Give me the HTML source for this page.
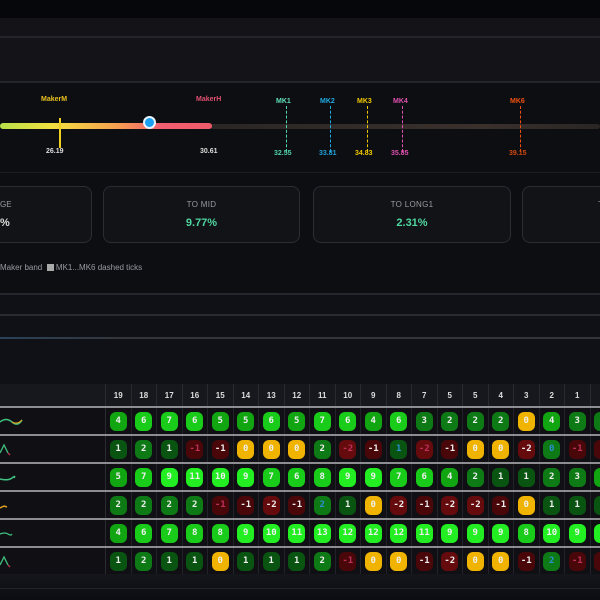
<!DOCTYPE html><html><head><meta charset="utf-8"><style>
*{margin:0;padding:0;box-sizing:border-box}
body{width:600px;height:600px;overflow:hidden;background:#0e0f13;font-family:"Liberation Sans",sans-serif;position:relative}
.a{position:absolute}
.lbl{font-size:7px;font-weight:bold}
.num{font-size:7px;font-weight:bold}
.card{position:absolute;top:186px;height:57px;border:1px solid #2c2d33;border-radius:8px;background:#121317;text-align:center}
.card .t{font-size:8px;color:#9a9aa0;margin-top:13px;letter-spacing:.3px}
.card .v{font-size:11px;color:#4fd6a0;font-weight:bold;margin-top:8px}
.row{position:absolute;left:0;width:620px;height:28px;border-top:2px solid #8d8d92;background:#101014;display:flex}
.fc{width:106px;height:26px;border-right:1px solid #2a2b30;position:relative;flex-shrink:0}
.c{width:25.5px;height:26px;border-right:1px solid #22232a;display:flex;align-items:center;justify-content:center;flex-shrink:0}
.b{width:17px;height:19px;border-radius:6px;font-size:9px;font-weight:bold;color:#eee;display:flex;align-items:center;justify-content:center;font-family:"DejaVu Sans Mono",monospace}
.g5{background:#22ee22}.g4{background:#1acc1a}.g3{background:#12a512}.g2{background:#0e7a16}.g1{background:#0a5412}.y{background:#f0b400}.r1{background:#4a070a}.r2{background:#650b0d}
.dm{color:#c0305a}.bl{color:#2a8fd0}
.hd{position:absolute;left:0;top:384px;width:620px;height:22px;background:#17181d;display:flex}
.hd .c{height:22px;font-size:8px;color:#ddd;font-weight:bold;border-right:1px solid #2a2b30}
</style></head><body>
<div class="a" style="left:0;top:0;width:600px;height:18px;background:#05070a"></div>
<div class="a" style="left:0;top:18px;width:600px;height:64px;background:#131318"></div>
<div class="a" style="left:0;top:36px;width:600px;height:2px;background:#24252a"></div>
<div class="a" style="left:0;top:81px;width:600px;height:2px;background:#24252a"></div>
<div class="a" style="left:0;top:83px;width:600px;height:210px;background:#0d0e12"></div>
<div class="a" style="left:210px;top:124px;width:390px;height:5px;background:linear-gradient(90deg,#2a2624,#3a302c 70%,#2a2624);border-radius:3px"></div>
<div class="a" style="left:0;top:123px;width:212px;height:6px;border-radius:3px;background:linear-gradient(90deg,#b8e04a,#f3e040 25%,#f6a050 55%,#f06070 75%,#f05a6a)"></div>
<div class="a" style="left:59px;top:118px;width:2px;height:30px;background:#f0d020"></div>
<div class="a" style="left:143px;top:116px;width:13px;height:13px;border-radius:50%;background:#1aa0f0;border:2px solid #e8f4ff"></div>
<div class="a lbl" style="left:41px;top:96px;color:#e8c020">MakerM</div>
<div class="a lbl" style="left:196px;top:96px;color:#e05070">MakerH</div>
<div class="a num" style="left:46px;top:148px;color:#ddd">26.19</div>
<div class="a num" style="left:200px;top:148px;color:#ddd">30.61</div>
<div class="a" style="left:286px;top:106px;height:46px;border-left:1px dashed #50d8b0"></div>
<div class="a" style="left:330px;top:106px;height:46px;border-left:1px dashed #20a8e0"></div>
<div class="a" style="left:367px;top:106px;height:46px;border-left:1px dashed #f0c800"></div>
<div class="a" style="left:402px;top:106px;height:46px;border-left:1px dashed #e050b0"></div>
<div class="a" style="left:520px;top:106px;height:46px;border-left:1px dashed #f05010"></div>
<div class="a lbl" style="left:276px;top:98px;color:#60e0b8">MK1</div>
<div class="a lbl" style="left:320px;top:98px;color:#20a8e0">MK2</div>
<div class="a lbl" style="left:357px;top:98px;color:#f0c800">MK3</div>
<div class="a lbl" style="left:393px;top:98px;color:#e050b0">MK4</div>
<div class="a lbl" style="left:510px;top:98px;color:#f05010">MK6</div>
<div class="a num" style="left:274px;top:150px;color:#50d0a8">32.55</div>
<div class="a num" style="left:319px;top:150px;color:#20a0d8">33.81</div>
<div class="a num" style="left:355px;top:150px;color:#f0c800">34.83</div>
<div class="a num" style="left:391px;top:150px;color:#e050b0">35.85</div>
<div class="a num" style="left:509px;top:150px;color:#d04810">39.15</div>
<div class="a" style="left:0;top:172px;width:600px;height:1px;background:#1c1d22"></div>
<div class="card" style="left:-110px;width:202px"></div>
<div class="a" style="left:0;top:200px;font-size:8px;color:#9a9aa0">GE</div>
<div class="a" style="left:0;top:217px;font-size:11px;font-weight:bold;color:#ddd">%</div>
<div class="card" style="left:103px;width:197px"><div class="t">TO MID</div><div class="v">9.77%</div></div>
<div class="card" style="left:313px;width:198px"><div class="t">TO LONG1</div><div class="v">2.31%</div></div>
<div class="card" style="left:522px;width:198px"><div class="t" style="text-align:left;padding-left:75px">T</div></div>
<div class="a" style="left:0;top:263px;font-size:8px;color:#9a9aa0">Maker band &nbsp;<span style="display:inline-block;width:7px;height:7px;background:#aaa;vertical-align:-1px"></span> MK1...MK6 dashed ticks</div>
<div class="a" style="left:0;top:293px;width:600px;height:2px;background:#26272c"></div>
<div class="a" style="left:0;top:295px;width:600px;height:89px;background:#101116"></div>
<div class="a" style="left:0;top:314px;width:600px;height:2px;background:#2a2b30"></div>
<div class="a" style="left:0;top:337px;width:600px;height:2px;background:linear-gradient(90deg,#2a4258,#34363c 20%)"></div>
<div class="hd"><div class="fc" style="height:22px"></div>
<div class="c">19</div><div class="c">18</div><div class="c">17</div><div class="c">16</div><div class="c">15</div><div class="c">14</div><div class="c">13</div><div class="c">12</div><div class="c">11</div><div class="c">10</div><div class="c">9</div><div class="c">8</div><div class="c">7</div><div class="c">5</div><div class="c">5</div><div class="c">4</div><div class="c">3</div><div class="c">2</div><div class="c">1</div><div class="c"></div></div>

<div class="row" style="top:406px"><div class="fc"><svg class="a" style="left:0;top:6px" width="30" height="14"><path d="M0 8 Q6 3 12 8 T22 6" stroke="#40c080" fill="none" stroke-width="1.5"/><path d="M12 8 Q17 11 22 6" stroke="#e0a020" fill="none" stroke-width="1.2"/></svg></div>
<div class="c"><div class="b g3">4</div></div><div class="c"><div class="b g4">6</div></div><div class="c"><div class="b g4">7</div></div><div class="c"><div class="b g4">6</div></div><div class="c"><div class="b g3">5</div></div><div class="c"><div class="b g3">5</div></div><div class="c"><div class="b g4">6</div></div><div class="c"><div class="b g3">5</div></div><div class="c"><div class="b g4">7</div></div><div class="c"><div class="b g4">6</div></div><div class="c"><div class="b g3">4</div></div><div class="c"><div class="b g4">6</div></div><div class="c"><div class="b g2">3</div></div><div class="c"><div class="b g2">2</div></div><div class="c"><div class="b g2">2</div></div><div class="c"><div class="b g2">2</div></div><div class="c"><div class="b y">0</div></div><div class="c"><div class="b g3">4</div></div><div class="c"><div class="b g2">3</div></div><div class="c"><div class="b g2"></div></div></div>

<div class="row" style="top:434px"><div class="fc"><svg class="a" style="left:0;top:5px" width="20" height="16"><path d="M0 12 L4 4 L8 12" stroke="#40c080" fill="none" stroke-width="1.3"/><path d="M8 12 L10 14" stroke="#c03050" stroke-width="1.3"/></svg></div>
<div class="c"><div class="b g1">1</div></div><div class="c"><div class="b g2">2</div></div><div class="c"><div class="b g1">1</div></div><div class="c"><div class="b r1 dm">-1</div></div><div class="c"><div class="b r1">-1</div></div><div class="c"><div class="b y">0</div></div><div class="c"><div class="b y">0</div></div><div class="c"><div class="b y">0</div></div><div class="c"><div class="b g2">2</div></div><div class="c"><div class="b r2 dm">-2</div></div><div class="c"><div class="b r1">-1</div></div><div class="c"><div class="b g1 bl">1</div></div><div class="c"><div class="b r2 dm">-2</div></div><div class="c"><div class="b r1">-1</div></div><div class="c"><div class="b y">0</div></div><div class="c"><div class="b y">0</div></div><div class="c"><div class="b r2">-2</div></div><div class="c"><div class="b g2 bl">0</div></div><div class="c"><div class="b r1 dm">-1</div></div><div class="c"><div class="b r1"></div></div></div>

<div class="row" style="top:462px"><div class="fc"><svg class="a" style="left:0;top:6px" width="30" height="14"><path d="M0 9 Q8 11 12 8 T14 8" stroke="#40c080" fill="none" stroke-width="1.5"/></svg></div>
<div class="c"><div class="b g3">5</div></div><div class="c"><div class="b g4">7</div></div><div class="c"><div class="b g5">9</div></div><div class="c"><div class="b g5">11</div></div><div class="c"><div class="b g5">10</div></div><div class="c"><div class="b g5">9</div></div><div class="c"><div class="b g4">7</div></div><div class="c"><div class="b g4">6</div></div><div class="c"><div class="b g4">8</div></div><div class="c"><div class="b g5">9</div></div><div class="c"><div class="b g5">9</div></div><div class="c"><div class="b g4">7</div></div><div class="c"><div class="b g4">6</div></div><div class="c"><div class="b g3">4</div></div><div class="c"><div class="b g2">2</div></div><div class="c"><div class="b g1">1</div></div><div class="c"><div class="b g1">1</div></div><div class="c"><div class="b g2">2</div></div><div class="c"><div class="b g2">3</div></div><div class="c"><div class="b g3"></div></div></div>

<div class="row" style="top:490px"><div class="fc"><svg class="a" style="left:0;top:6px" width="30" height="14"><path d="M0 10 L4 8 L7 9" stroke="#e0a020" fill="none" stroke-width="1.5"/></svg></div>
<div class="c"><div class="b g2">2</div></div><div class="c"><div class="b g2">2</div></div><div class="c"><div class="b g2">2</div></div><div class="c"><div class="b g2">2</div></div><div class="c"><div class="b r1 dm">-1</div></div><div class="c"><div class="b r1">-1</div></div><div class="c"><div class="b r2">-2</div></div><div class="c"><div class="b r1">-1</div></div><div class="c"><div class="b g2 bl">2</div></div><div class="c"><div class="b g1">1</div></div><div class="c"><div class="b y">0</div></div><div class="c"><div class="b r2">-2</div></div><div class="c"><div class="b r1">-1</div></div><div class="c"><div class="b r2">-2</div></div><div class="c"><div class="b r2">-2</div></div><div class="c"><div class="b r1">-1</div></div><div class="c"><div class="b y">0</div></div><div class="c"><div class="b g1">1</div></div><div class="c"><div class="b g1">1</div></div><div class="c"><div class="b g1"></div></div></div>

<div class="row" style="top:518px"><div class="fc"><svg class="a" style="left:0;top:6px" width="30" height="14"><path d="M0 8 Q5 6 8 8 T12 8" stroke="#40c080" fill="none" stroke-width="1.3"/></svg></div>
<div class="c"><div class="b g3">4</div></div><div class="c"><div class="b g4">6</div></div><div class="c"><div class="b g4">7</div></div><div class="c"><div class="b g4">8</div></div><div class="c"><div class="b g4">8</div></div><div class="c"><div class="b g5">9</div></div><div class="c"><div class="b g5">10</div></div><div class="c"><div class="b g5">11</div></div><div class="c"><div class="b g5">13</div></div><div class="c"><div class="b g5">12</div></div><div class="c"><div class="b g5">12</div></div><div class="c"><div class="b g5">12</div></div><div class="c"><div class="b g5">11</div></div><div class="c"><div class="b g5">9</div></div><div class="c"><div class="b g5">9</div></div><div class="c"><div class="b g5">9</div></div><div class="c"><div class="b g4">8</div></div><div class="c"><div class="b g5">10</div></div><div class="c"><div class="b g5">9</div></div><div class="c"><div class="b g5"></div></div></div>

<div class="row" style="top:546px"><div class="fc"><svg class="a" style="left:0;top:5px" width="20" height="16"><path d="M0 12 L4 4 L8 12" stroke="#40c080" fill="none" stroke-width="1.3"/><path d="M8 12 L10 14" stroke="#c03050" stroke-width="1.3"/></svg></div>
<div class="c"><div class="b g1">1</div></div><div class="c"><div class="b g2">2</div></div><div class="c"><div class="b g1">1</div></div><div class="c"><div class="b g1">1</div></div><div class="c"><div class="b y">0</div></div><div class="c"><div class="b g1">1</div></div><div class="c"><div class="b g1">1</div></div><div class="c"><div class="b g1">1</div></div><div class="c"><div class="b g2">2</div></div><div class="c"><div class="b r1 dm">-1</div></div><div class="c"><div class="b y">0</div></div><div class="c"><div class="b y">0</div></div><div class="c"><div class="b r1">-1</div></div><div class="c"><div class="b r2">-2</div></div><div class="c"><div class="b y">0</div></div><div class="c"><div class="b y">0</div></div><div class="c"><div class="b r1">-1</div></div><div class="c"><div class="b g2 bl">2</div></div><div class="c"><div class="b r1 dm">-1</div></div><div class="c"><div class="b r1"></div></div></div>

<div class="a" style="left:0;top:574px;width:600px;height:26px;background:linear-gradient(180deg,#14161c,#0c0d12)"></div>
<div class="a" style="left:0;top:588px;width:600px;height:1px;background:#22242a"></div>
</body></html>
